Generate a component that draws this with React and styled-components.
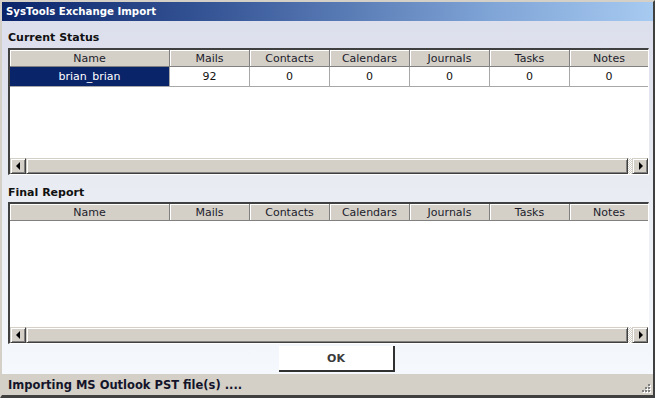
import React from 'react'
import styled, { createGlobalStyle } from 'styled-components'

const GlobalStyle = createGlobalStyle`
  html, body {
    margin: 0;
    padding: 0;
    background: #ffffff;
  }
  body {
    font-family: "DejaVu Sans", Verdana, sans-serif;
    font-size: 11px;
  }
`

const columns = ['Name', 'Mails', 'Contacts', 'Calendars', 'Journals', 'Tasks', 'Notes']

const Window = styled.div`
  width: 655px;
  height: 398px;
  box-sizing: border-box;
  display: flex;
  flex-direction: column;
  border-style: solid;
  border-width: 2px 2px 3px 2px;
  border-color: #d4d0c8 #404040 #404040 #d4d0c8;
  box-shadow: inset -1px -1px #808080;
  background: #d4d0c8;
`
const TitleBar = styled.div`
  height: 19px;
  flex: none;
  display: flex;
  align-items: center;
  padding-left: 4px;
  color: #ffffff;
  font-weight: bold;
  font-size: 10.2px;
  background: linear-gradient(to right, #0a246a 0%, #3a5a9a 35%, #7fa4d6 75%, #a6caf0 100%);
`
const Body = styled.div`
  flex: 1;
  display: flex;
  flex-direction: column;
  padding: 0 4px 0 6px;
  background: linear-gradient(to bottom, #dcdfec 0%, #e8ebf1 45%, #f5f8fd 100%);
`
const SectionLabel = styled.div`
  height: ${props => props.h}px;
  flex: none;
  display: flex;
  align-items: flex-end;
  padding: 0 0 ${props => props.pb}px 0;
  box-sizing: border-box;
  font-weight: bold;
  font-size: 11px;
  color: #111111;
`
const TableFrame = styled.div`
  height: ${props => props.h}px;
  flex: none;
  display: flex;
  flex-direction: column;
  box-sizing: border-box;
  border-style: solid;
  border-width: 2px 1px 1px 2px;
  border-color: #404040 #ffffff #ffffff #404040;
  box-shadow: inset 1px 1px #808080;
  background: #ffffff;
`
const Grid = styled.div`
  display: grid;
  grid-template-columns: 160px repeat(5, 80px) 1fr;
  flex: none;
`
const HeaderCell = styled.div`
  height: 17px;
  box-sizing: border-box;
  display: flex;
  align-items: center;
  justify-content: center;
  background: #d4d0c8;
  color: #1c1c2c;
  border-right: 1px solid #808080;
  border-bottom: 1px solid #808080;
  box-shadow: inset 1px 1px #ffffff;
  &:last-child {
    border-right: none;
  }
`
const DataCell = styled.div`
  height: 20px;
  box-sizing: border-box;
  display: flex;
  align-items: center;
  justify-content: center;
  background: ${props => (props.selected ? '#0a246a' : '#ffffff')};
  color: ${props => (props.selected ? '#ffffff' : '#111111')};
  border-right: 1px solid #a8a8a8;
  border-bottom: 1px solid #a8a8a8;
  &:last-child {
    border-right: none;
  }
`
const Filler = styled.div`
  flex: 1;
  background: #ffffff;
`
const ScrollBar = styled.div`
  height: 16px;
  flex: none;
  display: flex;
  background: #d4d0c8;
`
const Raised = styled.div`
  box-sizing: border-box;
  border-style: solid;
  border-width: 1px;
  border-color: #d4d0c8 #404040 #404040 #d4d0c8;
  box-shadow: inset 1px 1px #ffffff, inset -1px -1px #808080;
  background: #d4d0c8;
`
const ArrowButton = styled(Raised)`
  width: 16px;
  height: 16px;
  flex: none;
  display: flex;
  align-items: center;
  justify-content: center;
`
const Thumb = styled(Raised)`
  flex: 1;
  height: 16px;
`
const Track = styled.div`
  width: 4px;
  flex: none;
  background-image: repeating-conic-gradient(#ffffff 0% 25%, #d4d0c8 0% 50%);
  background-size: 2px 2px;
`
const Arrow = styled.div`
  width: 0;
  height: 0;
  border-top: 4px solid transparent;
  border-bottom: 4px solid transparent;
  ${props => (props.dir === 'left'
    ? 'border-right: 4px solid #000000; margin-right: 1px;'
    : 'border-left: 4px solid #000000; margin-left: 1px;')}
`
const ButtonRow = styled.div`
  height: 30px;
  flex: none;
  display: flex;
  align-items: center;
  padding-left: 271px;
`
const OkButton = styled.button`
  width: 116px;
  height: 26px;
  box-sizing: border-box;
  background: #ffffff;
  border: none;
  border-right: 2px solid #303030;
  border-bottom: 2px solid #303030;
  font-family: "DejaVu Sans", Verdana, sans-serif;
  font-weight: bold;
  font-size: 11px;
  color: #3a3a3a;
  padding: 0;
`
const StatusBar = styled.div`
  height: 21px;
  flex: none;
  display: flex;
  align-items: center;
  justify-content: space-between;
  padding: 0 2px 0 6px;
  background: #d4d0c8;
  font-weight: bold;
  font-size: 11.5px;
  color: #14142a;
`
const Grip = styled.svg`
  align-self: flex-end;
  margin-bottom: 1px;
`

const ScrollStrip = () => (
  <ScrollBar>
    <ArrowButton><Arrow dir="left" /></ArrowButton>
    <Thumb />
    <Track />
    <ArrowButton><Arrow dir="right" /></ArrowButton>
  </ScrollBar>
)

const DataTable = ({ h, rows }) => (
  <TableFrame h={h}>
    <Grid>
      {columns.map(c => <HeaderCell key={c}>{c}</HeaderCell>)}
    </Grid>
    {rows.map((row, i) => (
      <Grid key={i}>
        {row.map((v, j) => <DataCell key={j} selected={j === 0}>{v}</DataCell>)}
      </Grid>
    ))}
    <Filler />
    <ScrollStrip />
  </TableFrame>
)

const gripDots = [[9, 1], [6, 4], [9, 4], [3, 7], [6, 7], [9, 7]]

const App = () => (
  <>
    <GlobalStyle />
    <Window>
      <TitleBar>SysTools Exchange Import</TitleBar>
      <Body>
        <SectionLabel h={27} pb={4}>Current Status</SectionLabel>
        <DataTable h={127} rows={[['brian_brian', '92', '0', '0', '0', '0', '0']]} />
        <SectionLabel h={27} pb={3}>Final Report</SectionLabel>
        <DataTable h={142} rows={[]} />
        <ButtonRow>
          <OkButton>OK</OkButton>
        </ButtonRow>
      </Body>
      <StatusBar>
        <span>Importing MS Outlook PST file(s) ....</span>
        <Grip width="12" height="11" viewBox="0 0 12 11">
          {gripDots.map(([x, y]) => (
            <g key={`${x}-${y}`}>
              <rect x={x + 1} y={y + 1} width="2" height="2" fill="#ffffff" />
              <rect x={x} y={y} width="2" height="2" fill="#808080" />
            </g>
          ))}
        </Grip>
      </StatusBar>
    </Window>
  </>
)

export default App
